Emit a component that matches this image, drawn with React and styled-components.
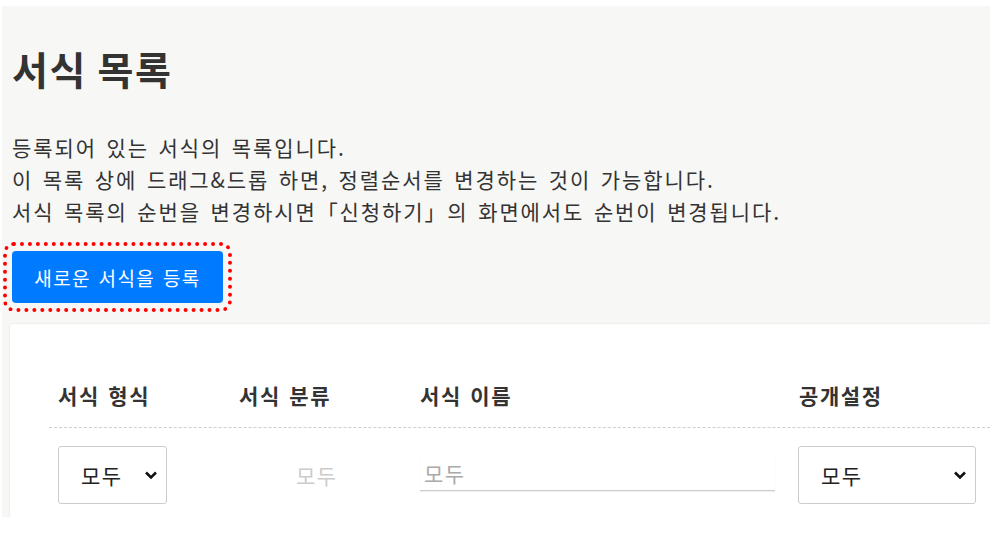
import React from "react";
import styled, { createGlobalStyle } from "styled-components";

const Global = createGlobalStyle`
  html, body {
    margin: 0;
    padding: 0;
    background: #fff;
  }
  body {
    font-family: "Noto Sans CJK KR", "Noto Sans", sans-serif;
    color: #333;
  }
`;

const Page = styled.div`
  padding: 6px 0 0 2px;
  height: 550px;
  box-sizing: border-box;
`;

const Panel = styled.div`
  background: #f7f7f5;
  height: 511px;
  overflow: hidden;
  padding: 0 0 0 8px;
  box-sizing: border-box;
`;

const Title = styled.h1`
  margin: 0;
  padding: 36px 0 0 2px;
  font-size: 39px;
  font-weight: 700;
  line-height: 52px;
  letter-spacing: 1.6px;
  color: #333;
`;

const Desc = styled.p`
  margin: 0;
  padding: 37px 0 0 2px;
  font-size: 21px;
  line-height: 32px;
  letter-spacing: 1.9px;
  word-spacing: 3px;
  color: #333;
`;

const ButtonWrap = styled.div`
  padding: 24px 0 0 2px;
`;

const PrimaryButton = styled.button`
  position: relative;
  width: 211px;
  height: 52px;
  border: none;
  border-radius: 4px;
  background: #007bff;
  color: #fff;
  font-family: inherit;
  font-size: 19px;
  letter-spacing: 1.4px;
  word-spacing: 2px;
  cursor: pointer;

  &::after {
    content: "";
    position: absolute;
    inset: -9px;
    border: 4px dotted #f00;
    border-radius: 11px;
  }
`;

const Card = styled.div`
  margin-top: 21px;
  background: #fff;
  box-shadow: 0 0 2px rgba(0, 0, 0, 0.12);
  border-radius: 2px 0 0 0;
  padding: 46px 0 40px 39px;
`;

const Row = styled.div`
  display: grid;
  grid-template-columns: 181px 181px 379px 1fr;
  align-items: start;
`;

const HeadRow = styled(Row)`
  height: 57px;
  border-bottom: 1px dashed #cfcfcf;
`;

const HeadCell = styled.div`
  padding: 10px 0 0 9px;
  font-size: 21px;
  font-weight: 700;
  color: #333;
  letter-spacing: 1.6px;
  word-spacing: 2px;
`;

const BodyRow = styled(Row)`
  padding-top: 18px;
`;

const Cell = styled.div`
  padding-left: ${(p) => p.$pad || 9}px;
`;

const SelectBox = styled.div`
  display: flex;
  align-items: center;
  justify-content: space-between;
  width: ${(p) => p.$w}px;
  height: 58px;
  box-sizing: border-box;
  border: 1px solid #ccc;
  border-radius: 3px;
  padding: 0 8px 0 22px;
  font-size: 21px;
  letter-spacing: 1.5px;
  color: #222;
  background: #fff;
`;

const Placeholder = styled.span`
  display: block;
  font-size: 21px;
  line-height: 58px;
  letter-spacing: 1.5px;
  color: #ccc;
  padding-left: 57px;
`;

const LineInput = styled.input`
  display: block;
  width: 355px;
  height: 40px;
  margin-top: 5px;
  border: none;
  border-bottom: 1px solid #ccc;
  box-shadow: 0 1px 1px rgba(0, 0, 0, 0.06);
  outline: none;
  padding: 5px 0 0 4px;
  box-sizing: border-box;
  font-family: inherit;
  font-size: 21px;
  letter-spacing: 1.5px;
  background: transparent;

  &::placeholder {
    color: #aaa;
  }
`;

const Chevron = () => (
  <svg width="14" height="10" viewBox="0 0 14 10">
    <path d="M2 2.5 L7 7.5 L12 2.5" fill="none" stroke="#111" strokeWidth="2.6" />
  </svg>
);

export default function App() {
  return (
    <Page>
      <Global />
      <Panel>
        <Title>서식 목록</Title>
        <Desc>
          등록되어 있는 서식의 목록입니다.
          <br />
          이 목록 상에 드래그&amp;드롭 하면, 정렬순서를 변경하는 것이 가능합니다.
          <br />
          서식 목록의 순번을 변경하시면「신청하기」의 화면에서도 순번이 변경됩니다.
        </Desc>
        <ButtonWrap>
          <PrimaryButton>새로운 서식을 등록</PrimaryButton>
        </ButtonWrap>
        <Card>
          <HeadRow>
            <HeadCell>서식 형식</HeadCell>
            <HeadCell>서식 분류</HeadCell>
            <HeadCell>서식 이름</HeadCell>
            <HeadCell>공개설정</HeadCell>
          </HeadRow>
          <BodyRow>
            <Cell>
              <SelectBox $w={109}>
                <span>모두</span>
                <Chevron />
              </SelectBox>
            </Cell>
            <Cell>
              <Placeholder>모두</Placeholder>
            </Cell>
            <Cell>
              <LineInput placeholder="모두" />
            </Cell>
            <Cell $pad={8}>
              <SelectBox $w={178}>
                <span>모두</span>
                <Chevron />
              </SelectBox>
            </Cell>
          </BodyRow>
        </Card>
      </Panel>
    </Page>
  );
}
